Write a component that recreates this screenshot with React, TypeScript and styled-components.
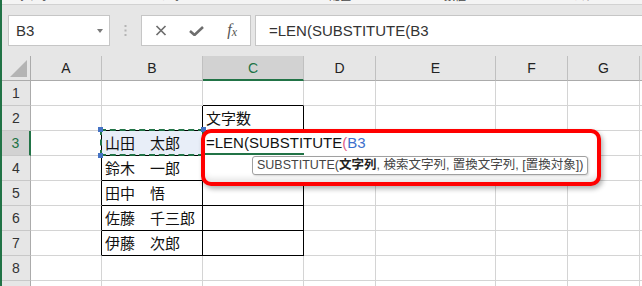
import React from "react";
import styled, { createGlobalStyle } from "styled-components";

const GREEN = "#217346";
const GRID = "#d4d4d4";
const HEAD_BG = "#e6e6e6";
const HEAD_ACTIVE = "#d2d2d2";
const HEAD_LINE = "#ababab";

const columns = [
  { name: "A", width: 71 },
  { name: "B", width: 101 },
  { name: "C", width: 101 },
  { name: "D", width: 72 },
  { name: "E", width: 120 },
  { name: "F", width: 72 },
  { name: "G", width: 72 },
  { name: "H", width: 80 },
];
const rows = [1, 2, 3, 4, 5, 6, 7, 8, 9];
const activeCol = "C";
const activeRow = 3;

const values: Record<string, string> = {
  C2: "文字数",
  B3: "山田　太郎",
  B4: "鈴木　一郎",
  B5: "田中　悟",
  B6: "佐藤　千三郎",
  B7: "伊藤　次郎",
};

const ribbonGroups = [
  { label: "クリップボード", width: 64 },
  { label: "フォント", width: 232 },
  { label: "配置", width: 84 },
  { label: "数値", width: 146 },
  { label: "スタイル", width: 136 },
];

// the bordered table: C2 header, B3:C7 body
const inTable = (col: string, row: number) =>
  (col === "C" && row >= 2 && row <= 7) || (col === "B" && row >= 3 && row <= 7);

export default function App() {
  return (
    <>
      <GlobalStyle />
      <Window>
        <RibbonEdge>
          {ribbonGroups.map((g) => (
            <RibbonGroup key={g.label} style={{ width: g.width }}>
              <span>{g.label}</span>
            </RibbonGroup>
          ))}
        </RibbonEdge>

        <FormulaBar>
          <NameBox>
            <span>B3</span>
            <DropCaret />
          </NameBox>
          <Grip>
            <svg width="3" height="11" viewBox="0 0 3 11">
              <rect x="0.5" y="0" width="2" height="2" fill="#b4b4b4" />
              <rect x="0.5" y="4.5" width="2" height="2" fill="#b4b4b4" />
              <rect x="0.5" y="9" width="2" height="2" fill="#b4b4b4" />
            </svg>
          </Grip>
          <FnButtons>
            <FnSlot>
              <svg width="12" height="11" viewBox="0 0 12 11">
                <path d="M1.5 1 L10.5 10 M10.5 1 L1.5 10" stroke="#6e6e6e" strokeWidth="1.7" fill="none" />
              </svg>
            </FnSlot>
            <FnSlot>
              <svg width="15" height="10" viewBox="0 0 15 10">
                <path d="M1 5 L5.5 9 L14 1" stroke="#6e6e6e" strokeWidth="2.6" fill="none" />
              </svg>
            </FnSlot>
            <FnSlot>
              <Fx>
                f<sub>x</sub>
              </Fx>
            </FnSlot>
          </FnButtons>
          <FormulaInput>=LEN(SUBSTITUTE(B3</FormulaInput>
        </FormulaBar>

        <SheetArea>
          <Sheet $widths={columns.map((c) => c.width)}>
            <Corner>
              <CornerMark />
            </Corner>
            {columns.map((c) => (
              <ColHead key={c.name} $active={c.name === activeCol}>
                {c.name}
              </ColHead>
            ))}
            {rows.map((r) => (
              <React.Fragment key={r}>
                <RowHead $active={r === activeRow}>{r}</RowHead>
                {columns.map((c, i) => {
                  const next = columns[i + 1]?.name ?? "";
                  const dark = inTable(c.name, r);
                  const right = dark || inTable(next, r) ? "#000" : GRID;
                  const bottom = dark || inTable(c.name, r + 1) ? "#000" : GRID;
                  const id = c.name + r;
                  return (
                    <Cell key={id} $right={right} $bottom={bottom} $fill={id === "B3" ? "#e8eef8" : undefined}>
                      {values[id]}
                    </Cell>
                  );
                })}
              </React.Fragment>
            ))}
          </Sheet>

          <Marquee>
            <Handle $x="left" $y="top" />
            <Handle $x="right" $y="top" />
            <Handle $x="left" $y="bottom" />
            <Handle $x="right" $y="bottom" />
          </Marquee>

          <Callout>
            <EditLine>
              =LEN(SUBSTITUTE<Paren>(</Paren>
              <Ref>B3</Ref>
            </EditLine>
            <ActiveEdge />
            <ArgTip>
              SUBSTITUTE(<b>文字列</b>, 検索文字列, 置換文字列, [置換対象])
            </ArgTip>
          </Callout>
        </SheetArea>
      </Window>
    </>
  );
}

const GlobalStyle = createGlobalStyle`
  html, body {
    margin: 0;
    padding: 0;
    background: #fff;
    overflow: hidden;
  }
`;

const Window = styled.div`
  width: 642px;
  height: 286px;
  box-sizing: border-box;
  border-left: 2px solid ${GREEN};
  overflow: hidden;
  background: #fff;
  font-family: "Liberation Sans", "Noto Sans CJK JP", sans-serif;
`;

const RibbonEdge = styled.div`
  display: flex;
  height: 4px;
  overflow: hidden;
  background: #f4f4f4;
  border-bottom: 1px solid #d2d2d2;
`;

const RibbonGroup = styled.div`
  flex: none;
  display: flex;
  justify-content: center;
  span {
    margin-top: -11px;
    font: 11px/12px "Noto Sans CJK JP", sans-serif;
    color: #444;
    white-space: nowrap;
  }
`;

const FormulaBar = styled.div`
  display: flex;
  align-items: center;
  height: 51px;
  padding: 0 0 0 6px;
  background: ${HEAD_BG};
  box-sizing: border-box;
`;

const NameBox = styled.div`
  flex: none;
  display: flex;
  align-items: center;
  justify-content: space-between;
  width: 102px;
  height: 31px;
  box-sizing: border-box;
  padding: 0 6px 0 7px;
  background: #fff;
  border: 1px solid #c6c6c6;
  font-size: 15px;
  color: #333;
`;

const DropCaret = styled.i`
  width: 0;
  height: 0;
  border-left: 3.5px solid transparent;
  border-right: 3.5px solid transparent;
  border-top: 4px solid #7a7a7a;
`;

const Grip = styled.div`
  flex: none;
  width: 31px;
  display: flex;
  justify-content: center;
  svg {
    display: block;
  }
`;

const FnButtons = styled.div`
  flex: none;
  display: flex;
  width: 110px;
  height: 31px;
  box-sizing: border-box;
  padding-left: 1px;
  background: #fff;
  border: 1px solid #c6c6c6;
`;

const FnSlot = styled.div`
  width: 36px;
  display: flex;
  align-items: center;
  justify-content: center;
  svg {
    display: block;
  }
`;

const Fx = styled.span`
  font: italic 16px "Liberation Serif", serif;
  color: #555;
  sub {
    font-size: 12px;
    vertical-align: -1px;
  }
`;

const FormulaInput = styled.div`
  flex: 1;
  height: 31px;
  margin-left: 4px;
  box-sizing: border-box;
  padding-left: 13px;
  display: flex;
  align-items: center;
  background: #fff;
  border: 1px solid #c6c6c6;
  border-right: none;
  font-size: 15px;
  color: #333;
  white-space: nowrap;
`;

const SheetArea = styled.div`
  position: relative;
`;

const Sheet = styled.div<{ $widths: number[] }>`
  display: grid;
  grid-template-columns: 29px ${(p) => p.$widths.map((w) => `${w}px`).join(" ")};
  grid-auto-rows: 25px;
`;

const Corner = styled.div`
  display: flex;
  align-items: flex-end;
  justify-content: flex-end;
  padding: 0 3px 3px 0;
  background: ${HEAD_BG};
  border-right: 1px solid ${HEAD_LINE};
  border-bottom: 1px solid ${HEAD_LINE};
`;

const CornerMark = styled.i`
  width: 0;
  height: 0;
  border-left: 17px solid transparent;
  border-bottom: 17px solid #b4b4b4;
`;

const ColHead = styled.div<{ $active: boolean }>`
  display: flex;
  align-items: center;
  justify-content: center;
  box-sizing: border-box;
  background: ${(p) => (p.$active ? HEAD_ACTIVE : HEAD_BG)};
  border-right: 1px solid #c0c0c0;
  border-bottom: ${(p) => (p.$active ? `2px solid ${GREEN}` : `1px solid ${HEAD_LINE}`)};
  padding-top: ${(p) => (p.$active ? "1px" : "0")};
  color: ${(p) => (p.$active ? GREEN : "#222")};
  font-size: 14px;
`;

const RowHead = styled.div<{ $active: boolean }>`
  display: flex;
  align-items: center;
  justify-content: center;
  box-sizing: border-box;
  background: ${(p) => (p.$active ? HEAD_ACTIVE : HEAD_BG)};
  border-right: ${(p) => (p.$active ? `2px solid ${GREEN}` : `1px solid ${HEAD_LINE}`)};
  border-bottom: 1px solid #c8c8c8;
  color: ${(p) => (p.$active ? GREEN : "#333")};
  font-size: 14px;
`;

const Cell = styled.div<{ $right: string; $bottom: string; $fill?: string }>`
  box-sizing: border-box;
  padding: 0 3px;
  background: ${(p) => p.$fill ?? "#fff"};
  border-right: 1px solid ${(p) => p.$right};
  border-bottom: 1px solid ${(p) => p.$bottom};
  font: 15px/24px "Noto Sans CJK JP", sans-serif;
  color: #111;
  white-space: nowrap;
  overflow: hidden;
`;

const Marquee = styled.div`
  position: absolute;
  left: 98px;
  top: 73px;
  width: 104px;
  height: 27px;
  box-sizing: border-box;
  border: 2px dashed ${GREEN};
`;

const Handle = styled.i<{ $x: "left" | "right"; $y: "top" | "bottom" }>`
  position: absolute;
  ${(p) => p.$x}: -4px;
  ${(p) => p.$y}: -4px;
  width: 5px;
  height: 5px;
  background: #4472c4;
`;

const Callout = styled.div`
  position: absolute;
  left: 199px;
  top: 73px;
  width: 400px;
  height: 57px;
  box-sizing: border-box;
  display: flex;
  flex-direction: column;
  align-items: flex-start;
  background: #fff;
  border: 4px solid #f00;
  border-radius: 10px;
  box-shadow: 2px 3px 5px rgba(0, 0, 0, 0.3), inset 0 -6px 6px -3px rgba(0, 0, 0, 0.12);
`;

const EditLine = styled.div`
  height: 20px;
  padding-left: 1px;
  font-size: 15px;
  line-height: 20px;
  color: #111;
  white-space: nowrap;
`;

const Paren = styled.span`
  color: #e0608a;
`;

const Ref = styled.span`
  color: #3d6fcc;
`;

const ActiveEdge = styled.div`
  width: 99px;
  height: 2px;
  background: ${GREEN};
`;

const ArgTip = styled.div`
  margin: 1px 0 0 47px;
  height: 19px;
  box-sizing: border-box;
  padding: 0 4px;
  background: #fff;
  border: 1px solid #a0a0a0;
  border-radius: 3px;
  box-shadow: 1px 1px 2px rgba(0, 0, 0, 0.15);
  font: 12.5px/17px "Liberation Sans", "Noto Sans CJK JP", sans-serif;
  color: #444;
  white-space: nowrap;
  b {
    color: #222;
  }
`;
